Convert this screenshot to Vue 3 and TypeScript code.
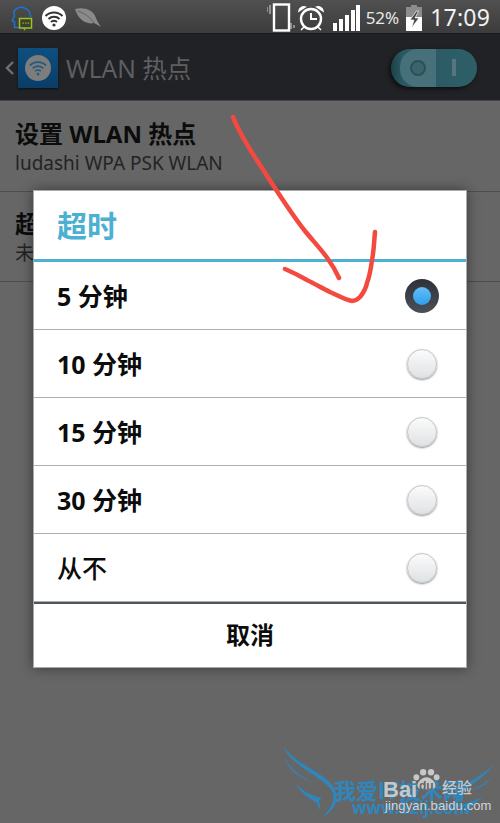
<script setup lang="ts">
const options = [
  { label: '5 分钟', on: true },
  { label: '10 分钟', on: false },
  { label: '15 分钟', on: false },
  { label: '30 分钟', on: false },
  { label: '从不', on: false },
]
</script>

<template>
  <div class="screen">
    <header class="status">
      <div class="status-left">
        <svg class="ic-qq" width="24" height="26" viewBox="0 0 24 26">
          <path d="M19.500 12V10.500A9 9 0 0 0 3 6.500C2.700 8 3 9.500 3.500 11L1 15.500 3.500 17v5.500H8" fill="none" stroke="#1e73d2" stroke-width="1.500"/>
          <rect x="8.500" y="13.500" width="12" height="9.500" fill="#3d4030" stroke="#9dc11f" stroke-width="1.500"/>
          <path d="M12 23.500l1.500 2 1.500-2z" fill="#9dc11f"/>
          <path d="M11.500 18.200h6.500" stroke="#9dc11f" stroke-width="1.300" stroke-dasharray="1.300 1.300"/>
        </svg>
        <svg class="ic-wifi" width="24" height="24" viewBox="0 0 24 24">
          <circle cx="12" cy="12" r="12" fill="#fff"/>
          <path d="M3.500 10a12 12 0 0 1 17 0M6.500 13a8 8 0 0 1 11 0M9 16a4.200 4.200 0 0 1 6 0" fill="none" stroke="#333" stroke-width="2"/>
          <circle cx="12" cy="19" r="1.600" fill="#333"/>
        </svg>
        <svg class="ic-leaf" width="26" height="20" viewBox="0 0 26 20">
          <path d="M0 1C8-1 18 1 21 10c1 3 3 6 5 9-3-2-5-3-7-4C11 17 3 11 0 1z" fill="#8a8a8a"/>
          <path d="M3 3c6 2 12 6 16 12" fill="none" stroke="#555" stroke-width=".8"/>
        </svg>
      </div>
      <div class="status-right">
        <svg width="28" height="30" viewBox="0 0 28 30">
          <path d="M0 4v5M3 2v9M24 20v6M27 22v3" stroke="#aaa" stroke-width="1.500"/>
          <rect x="7" y="1.500" width="15" height="26" fill="none" stroke="#fff" stroke-width="2.400"/>
        </svg>
        <svg class="ic-alarm" width="26" height="26" viewBox="0 0 26 26">
          <circle cx="13" cy="14" r="10" fill="none" stroke="#fff" stroke-width="2.400"/>
          <path d="M13 8v6h6" fill="none" stroke="#fff" stroke-width="2"/>
          <path d="M1 6a5 5 0 0 1 6-4zM25 6a5 5 0 0 0-6-4zM6 22l-3 3M20 22l3 3" fill="#fff" stroke="#fff" stroke-width="1.500"/>
        </svg>
        <svg class="ic-signal" width="27" height="26" viewBox="0 0 27 26">
          <path d="M0 18h4v8H0zM6 14h4v12H6zM12 10h4v16h-4zM18 5h4v21h-4zM23 0h4v26h-4z" fill="#fff"/>
        </svg>
        <span class="pct">52%</span>
        <svg width="16" height="26" viewBox="0 0 16 26">
          <path d="M5 0h6v2h5v10H0V2h5z" fill="#8c8c8c"/>
          <path d="M0 12h16v14H0z" fill="#fff"/>
          <path d="M10.500 6 4 15h4L5.500 23 13 13H9l3.500-7z" fill="#444" stroke="#fff" stroke-width=".7"/>
        </svg>
        <span class="time">17:09</span>
      </div>
    </header>

    <nav class="bar">
      <svg class="back" width="11" height="16" viewBox="0 0 11 16"><path d="M9 2 3 8l6 6" fill="none" stroke="#6f7074" stroke-width="2.400"/></svg>
      <div class="app-icon">
        <svg width="26" height="26" viewBox="0 0 32 32">
          <circle cx="16" cy="16" r="16" fill="#7d7d7d"/>
          <path d="M6 13a14 14 0 0 1 20 0M9.500 16.500a9 9 0 0 1 13 0M12.500 20a5 5 0 0 1 7 0" fill="none" stroke="#1f5c7c" stroke-width="2"/>
          <circle cx="16" cy="23.500" r="1.700" fill="#1f5c7c"/>
        </svg>
      </div>
      <span class="bar-title">WLAN 热点</span>
      <div class="switch">
        <div class="knob"><span class="ring"></span></div>
        <span class="tick"></span>
      </div>
    </nav>

    <section class="settings">
      <div class="row">
        <div class="row-title">设置 WLAN 热点</div>
        <div class="row-sub">ludashi WPA PSK WLAN</div>
      </div>
      <div class="row">
        <div class="row-title">超时</div>
        <div class="row-sub">未使用</div>
      </div>
    </section>

    <div class="dialog">
      <div class="dlg-title">超时</div>
      <div v-for="o in options" :key="o.label" class="opt">
        <span>{{ o.label }}</span>
        <span v-if="o.on" class="radio-on"><i></i></span>
        <span v-else class="radio-off"></span>
      </div>
      <div class="cancel"><span>取消</span></div>
    </div>

    <svg class="arrow" width="500" height="823" viewBox="0 0 500 823">
      <path d="M233 117C238 130 250 150 262 168C275 188 290 212 305 231C318 247 330 258 339 278M285 269C292 272 300 276 307 280C315 284 322 288 330 292C337 295 345 300 352 301C356 301 358 299 360 297C364 292 366 288 367 283C370 275 371 268 372 260C374 250 374 242 375 232" fill="none" stroke="#f4493f" stroke-width="4.500" stroke-linecap="round"/>
    </svg>

    <div class="mark">
      <svg class="wings" width="230" height="93" viewBox="0 0 230 93">
        <path d="M13 16c6 14 20 22 32 30 9 6 16 11 18 18 2 8-3 16-11 23 11-5 16-14 14-24-2-9-10-15-20-21C33 34 22 28 13 16zM14 28c6 13 15 20 28 24-11-5-20-12-28-24zM26 54c4 8 12 14 20 18 2 3 2 5 4 8 1-3-1-7-1-10l3-2c-10-2-18-6-26-14zM224 34c-7 11-18 17-28 25-7 6-10 14-8 28-6-12-3-22 5-30 9-8 22-13 31-23zM222 46c-5 7-13 11-22 14 9-1 18-6 22-14zM214 66c-7 4-13 6-20 8 2 3 1 7-1 11 5-6 13-12 21-19z" fill="#2f86bd"/>
      </svg>
      <span class="wm-cn">我爱IT技术网</span>
      <span class="wm-www">www.52ij.com</span>
      <span class="wm-bai">Bai</span>
      <svg class="paw" width="27" height="22" viewBox="0 0 24 24" preserveAspectRatio="none"><g fill="#c8c8c8"><ellipse cx="3" cy="9" rx="2.600" ry="3.400"/><ellipse cx="9" cy="3.500" rx="2.800" ry="3.500"/><ellipse cx="16" cy="3.500" rx="2.800" ry="3.500"/><ellipse cx="21" cy="9" rx="2.600" ry="3.400"/><path d="M12 9c-4 0-8 5-8 9 0 4 4 5 8 4 4 1 8 0 8-4 0-4-4-9-8-9z"/></g></svg>
      <span class="wm-du">du</span>
      <span class="wm-jy">经验</span>
      <span class="wm-url">jingyan.baidu.com</span>
    </div>
  </div>
</template>

<style>
html, body { margin: 0; padding: 0; background: #666; }
</style>

<style scoped>
.screen {
  position: relative;
  width: 500px;
  height: 823px;
  overflow: hidden;
  background: #666;
  font-family: "Noto Sans", "Noto Sans CJK SC", sans-serif;
}
.status {
  height: 34px;
  box-sizing: border-box;
  display: flex;
  justify-content: space-between;
  align-items: center;
  padding: 2px 10px 0 11px;
  background: linear-gradient(#505050, #3c3c3c);
  border-bottom: 1px solid #1b1b1b;
}
.status-left, .status-right { display: flex; align-items: center; }
.ic-wifi { margin-left: 7px; }
.ic-leaf { margin-left: 9px; }
.ic-alarm { margin-left: 3px; }
.ic-signal { margin-left: 9px; }
.pct { margin: 0 7px 0 6px; font-size: 17px; color: #e8e8e8; }
.time { margin-left: 8px; font-size: 23px; color: #f2f2f2; line-height: 1; letter-spacing: .2px; }
.bar {
  height: 67px;
  box-sizing: border-box;
  display: flex;
  align-items: center;
  padding: 1px 23px 0 4px;
  background: #212226;
  border-bottom: 1px solid #444;
}
.back { margin-right: 3px; }
.app-icon {
  width: 40px;
  height: 40px;
  display: flex;
  align-items: center;
  justify-content: center;
  background: linear-gradient(#0e4f80, #0a3d68);
  box-shadow: 0 1px 2px rgba(0,0,0,.6);
}
.bar-title { margin-left: 8px; font-size: 24.500px; color: #5e5f61; }
.switch {
  margin-left: auto;
  width: 86px;
  height: 38px;
  border-radius: 19px;
  background: linear-gradient(90deg, #1d3f47 0, #2a5761 12%, #2e5f69 100%);
  position: relative;
  display: flex;
  align-items: center;
  justify-content: flex-end;
  padding-right: 21px;
  box-sizing: border-box;
  overflow: hidden;
  box-shadow: -2px 2px 4px rgba(0,0,0,.6);
}
.knob {
  position: absolute;
  left: 9px;
  top: 0;
  width: 36px;
  height: 38px;
  border-radius: 18px 0 0 18px;
  background: #46707a;
  display: flex;
  align-items: center;
  padding-left: 10px;
  box-sizing: border-box;
}
.ring {
  width: 16px;
  height: 16px;
  box-sizing: border-box;
  border-radius: 50%;
  border: 2px solid #2d5058;
  background: #3a636c;
}
.tick { width: 4px; height: 17px; background: #54767c; position: relative; }
.settings { display: flex; flex-direction: column; margin-top: 1px; }
.row {
  height: 90px;
  box-sizing: border-box;
  padding: 16px 15px 0;
  border-bottom: 1px solid #4e4e4e;
}
.row-title { font-size: 24px; font-weight: 700; line-height: 32px; color: #0c0c0c; }
.row-sub { font-size: 19px; line-height: 26px; color: #232323; }
.dialog {
  position: absolute;
  left: 33px;
  top: 190px;
  width: 434px;
  height: 478px;
  box-sizing: border-box;
  background: #fff;
  border: 1px solid #a8abae;
  box-shadow: 0 0 12px rgba(0,0,0,.45);
  display: flex;
  flex-direction: column;
}
.dlg-title {
  height: 71px;
  flex: none;
  box-sizing: border-box;
  padding: 0 23px;
  line-height: 70px;
  font-size: 30px;
  font-weight: 700;
  color: #4cb0d2;
  border-bottom: 3px solid #4cb0d2;
}
.opt {
  height: 68px;
  flex: none;
  box-sizing: border-box;
  display: flex;
  justify-content: space-between;
  align-items: center;
  padding: 0 29px 0 23px;
  font-size: 25px;
  font-weight: 700;
  color: #0c0c0c;
  border-bottom: 1px solid #a8aeb4;
}
.opt > span:first-child { margin-top: -2px; }
.opt:nth-of-type(6) { font-weight: 500; }
.radio-on {
  width: 34px;
  height: 34px;
  margin-right: -2px;
  border-radius: 50%;
  background: linear-gradient(#2d3138, #4b5058);
  display: flex;
  align-items: center;
  justify-content: center;
}
.radio-on i {
  width: 18px;
  height: 18px;
  border-radius: 50%;
  background: linear-gradient(#63bdf6, #2ea0ee);
}
.radio-off {
  width: 30px;
  height: 30px;
  border-radius: 50%;
  background: linear-gradient(#fbfbfb, #dfe2e4);
  border: 1px solid #c4c6c8;
  box-sizing: border-box;
  box-shadow: 0 1px 2px rgba(0,0,0,.45);
}
.cancel {
  flex: 1;
  display: flex;
  align-items: center;
  justify-content: center;
  padding-bottom: 4px;
  font-size: 24px;
  font-weight: 700;
  color: #0c0c0c;
  border-top: 2px solid #50565c;
}
.arrow { position: absolute; left: 0; top: 0; pointer-events: none; }
.mark { position: absolute; left: 270px; top: 730px; width: 230px; height: 93px; }
.wings { position: absolute; left: 0; top: 0; }
.wm-cn { position: absolute; left: 64px; top: 45px; font-family: "Noto Sans CJK SC", sans-serif; font-size: 22px; font-weight: 700; color: #2f86bd; white-space: nowrap; line-height: 28px; }
.wm-www { position: absolute; left: 82px; top: 68px; font-size: 17px; font-weight: 700; color: #2f86bd; white-space: nowrap; line-height: 20px; }
.wm-bai { position: absolute; left: 113px; top: 47px; font-family: "Liberation Sans", sans-serif; font-size: 22px; font-weight: 700; color: #c8c8c8; white-space: nowrap; line-height: 26px; }
.paw { position: absolute; left: 143px; top: 39px; }
.wm-du { position: absolute; left: 149px; top: 50px; font-family: "Liberation Sans", sans-serif; font-size: 12px; font-weight: 700; color: #666; line-height: 12px; }
.wm-jy { position: absolute; left: 172px; top: 46px; font-family: "Noto Sans CJK SC", sans-serif; font-size: 15px; font-weight: 500; color: #c8c8c8; white-space: nowrap; line-height: 22px; }
.wm-url { position: absolute; left: 115px; top: 68px; font-family: "Liberation Sans", sans-serif; font-size: 13px; color: #d4d4d4; white-space: nowrap; line-height: 16px; letter-spacing: .1px; }
</style>
